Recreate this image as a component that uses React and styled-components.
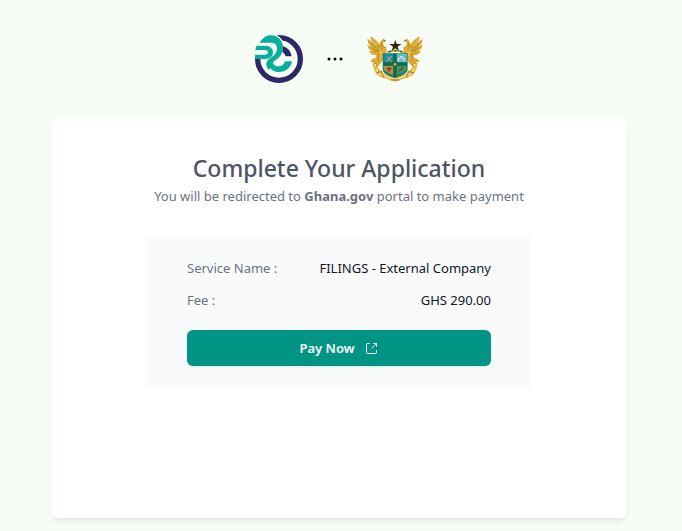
import React from "react";
import styled, { createGlobalStyle } from "styled-components";

const GlobalStyle = createGlobalStyle`
  *, *::before, *::after { box-sizing: border-box; }
  body {
    margin: 0;
    background: #f7fcf6;
    font-family: "Segoe UI", "Noto Sans", "Open Sans", sans-serif;
    font-size: 13px;
    line-height: 20px;
    color: #111827;
  }
  h1, p, dl, dd { margin: 0; }
`;

const Page = styled.main`
  display: flex;
  flex-direction: column;
  align-items: center;
  gap: 32px;
  min-height: 100vh;
  padding: 32px 4px 12px 0;
`;

const Brands = styled.header`
  display: flex;
  align-items: center;
  justify-content: center;
  gap: 24px;
  height: 54px;
`;

const Card = styled.section`
  display: flex;
  flex-direction: column;
  align-items: center;
  width: calc(100% - 32px);
  max-width: 576px;
  min-height: 400px;
  padding: 32px;
  background: #ffffff;
  border-radius: 6px;
  box-shadow: 0 4px 6px -1px rgba(0, 0, 0, 0.06), 0 2px 4px -1px rgba(0, 0, 0, 0.05);
`;

const Title = styled.h1`
  font-size: 23px;
  line-height: 36px;
  font-weight: 500;
  color: #4b5563;
`;

const Subtitle = styled.p`
  color: #6b7280;
`;

const Summary = styled.div`
  width: 100%;
  max-width: 384px;
  margin-top: 32px;
  padding: 20px 40px;
  background: #f9fafb;
`;

const Details = styled.dl`
  display: flex;
  flex-direction: column;
  gap: 12px;
`;

const Row = styled.div`
  display: flex;
  justify-content: space-between;
`;

const Label = styled.dt`
  color: #6b7280;
`;

const PayButton = styled.button`
  display: flex;
  align-items: center;
  justify-content: center;
  gap: 12px;
  width: 100%;
  height: 36px;
  margin-top: 20px;
  border: 0;
  border-radius: 6px;
  background: #009485;
  color: #ffffff;
  font: inherit;
  font-weight: 600;
  box-shadow: 0 1px 2px rgba(0, 0, 0, 0.1);
  cursor: pointer;
`;

function RegistrarLogo() {
  return (
    <svg width="48" height="48" viewBox="0 0 144 144" fill="none" role="img" aria-label="Registrar logo">
      <circle cx="72" cy="72" r="64" stroke="#2d2667" strokeWidth="16" />
      <path d="M-2 -2H60C84 8 94 32 84 56L62 84L40 72H-2Z" fill="#f7fcf6" />
      <path d="M84 34C98 38 108 49 110 64H92C90 58 87 54 82 51Z" fill="#2d2667" />
      <path d="M14 23C23 9 34 1 48 1C70 1 84 18 84 39C84 60 69 70 57 79C53 82 52 86 55 90L41 104C31 92 32 79 43 71C58 62 66 53 66 40C66 30 60 23 49 23Z" fill="#08b09a" />
      <path d="M4 32H31C46 32 54 41 54 52C54 63 45 72 31 72H0V59H28C35 59 39 56 39 52C39 48 35 45 29 45H1Z" fill="#08b09a" />
      <path d="M37 86C43 101 56 111 72 111C92 111 108 98 111 79H90C87 88 81 94 72 94C63 94 56 90 53 83Z" fill="#08b09a" />
    </svg>
  );
}

function Dots() {
  return (
    <svg width="16" height="4" viewBox="0 0 16 4" fill="#000000" aria-hidden="true">
      <circle cx="2" cy="2" r="1.5" />
      <circle cx="8" cy="2" r="1.5" />
      <circle cx="14" cy="2" r="1.5" />
    </svg>
  );
}

function Eagle() {
  return (
    <g>
      <path d="M61 43C49 39 48 28 54 17C46 24 42 31 43 40C37 29 28 17 16 12C18 20 24 28 31 33C22 31 14 26 8 20C9 30 18 38 28 41C21 43 13 40 8 37C11 47 21 52 31 50C25 55 18 55 14 54C20 63 29 64 35 60L33 75C26 75 20 78 18 83L31 83L21 93L34 88L32 100L42 89L52 76L58 61Z" fill="#dfb33a" stroke="#d5a12b" strokeWidth="4" />
      <path d="M21 20L41 43M16 30L39 48M18 43L39 52M25 55L41 51M38 60L38 84M47 29L49 49" stroke="#a47418" strokeWidth="2" />
      <path d="M18 17L34 34M18 25L33 37M44 52L49 66" stroke="#f3d66b" strokeWidth="2" />
      <path d="M54 17L62 21L55 25Z" fill="#a47418" />
    </g>
  );
}

function CoatOfArms() {
  return (
    <svg width="56" height="48" viewBox="12 10 168 144" fill="none" role="img" aria-label="Coat of arms of Ghana">
      <g transform="translate(8 6)"><Eagle /></g>
      <g transform="translate(184 6) scale(-1 1)"><Eagle /></g>
      <path d="M31 98Q30 132 64 139L96 150L128 139Q162 132 162 98L149 105L132 126L96 138L60 126L43 105Z" fill="#e5b93b" />
      <path d="M40 111Q45 131 69 134L96 143L124 134Q148 131 153 111" stroke="#f6e39a" strokeWidth="4" />
      <path d="M40 124L55 119L62 138M152 124L137 119L130 138M84 145H109" stroke="#bd8926" strokeWidth="4" />
      <path d="M59 65H134V114C132 128 111 134 96 139C81 134 61 128 59 114Z" fill="#247b77" />
      <path d="M62 67H92V93H62Z" fill="#168da5" />
      <path d="M100 67H131V93H100Z" fill="#65bfd0" />
      <path d="M62 102H91V130L74 123L62 114Z" fill="#b98d42" />
      <path d="M101 102H131V115L119 123L101 130Z" fill="#3f945a" />
      <path d="M96 66V137M61 97H132" stroke="#176944" strokeWidth="10" />
      <path d="M72 74L85 89M86 73L71 89" stroke="#d8bd54" strokeWidth="3" />
      <path d="M106 89V80H112V75H118V80H124V89" stroke="#e4edeb" strokeWidth="3" />
      <path d="M78 106V120M71 111H86M108 119L121 107" stroke="#69461f" strokeWidth="4" />
      <circle cx="96" cy="98" r="4" fill="#d8b84a" />
      <path d="M71 62Q97 53 123 62" stroke="#c8b24b" strokeWidth="6" />
      <path d="M77 61L84 58M94 57H101M110 58L117 61" stroke="#347442" strokeWidth="5" />
      <path d="M97 24L101 37H115L104 45L108 58L97 50L86 58L90 45L79 37H93Z" fill="#302817" />
    </svg>
  );
}

function ExternalIcon() {
  return (
    <svg width="12" height="12" viewBox="0 0 12 12" fill="none" stroke="currentColor" aria-hidden="true">
      <path d="M4 1.5H1.5Q.5 1.5 .5 2.5V10.5Q.5 11.5 1.5 11.5H9.5Q10.5 11.5 10.5 10.5V8M7 1.5H10.5V5M10.5 1.5L5.5 6.5" />
    </svg>
  );
}

export default function App() {
  return (
    <>
      <GlobalStyle />
      <Page>
        <Brands>
          <RegistrarLogo />
          <Dots />
          <CoatOfArms />
        </Brands>
        <Card>
          <Title>Complete Your Application</Title>
          <Subtitle>
            You will be redirected to <strong>Ghana.gov</strong> portal to make payment
          </Subtitle>
          <Summary>
            <Details>
              <Row>
                <Label>Service Name :</Label>
                <dd>FILINGS - External Company</dd>
              </Row>
              <Row>
                <Label>Fee :</Label>
                <dd>GHS 290.00</dd>
              </Row>
            </Details>
            <PayButton type="button">
              Pay Now
              <ExternalIcon />
            </PayButton>
          </Summary>
        </Card>
      </Page>
    </>
  );
}
